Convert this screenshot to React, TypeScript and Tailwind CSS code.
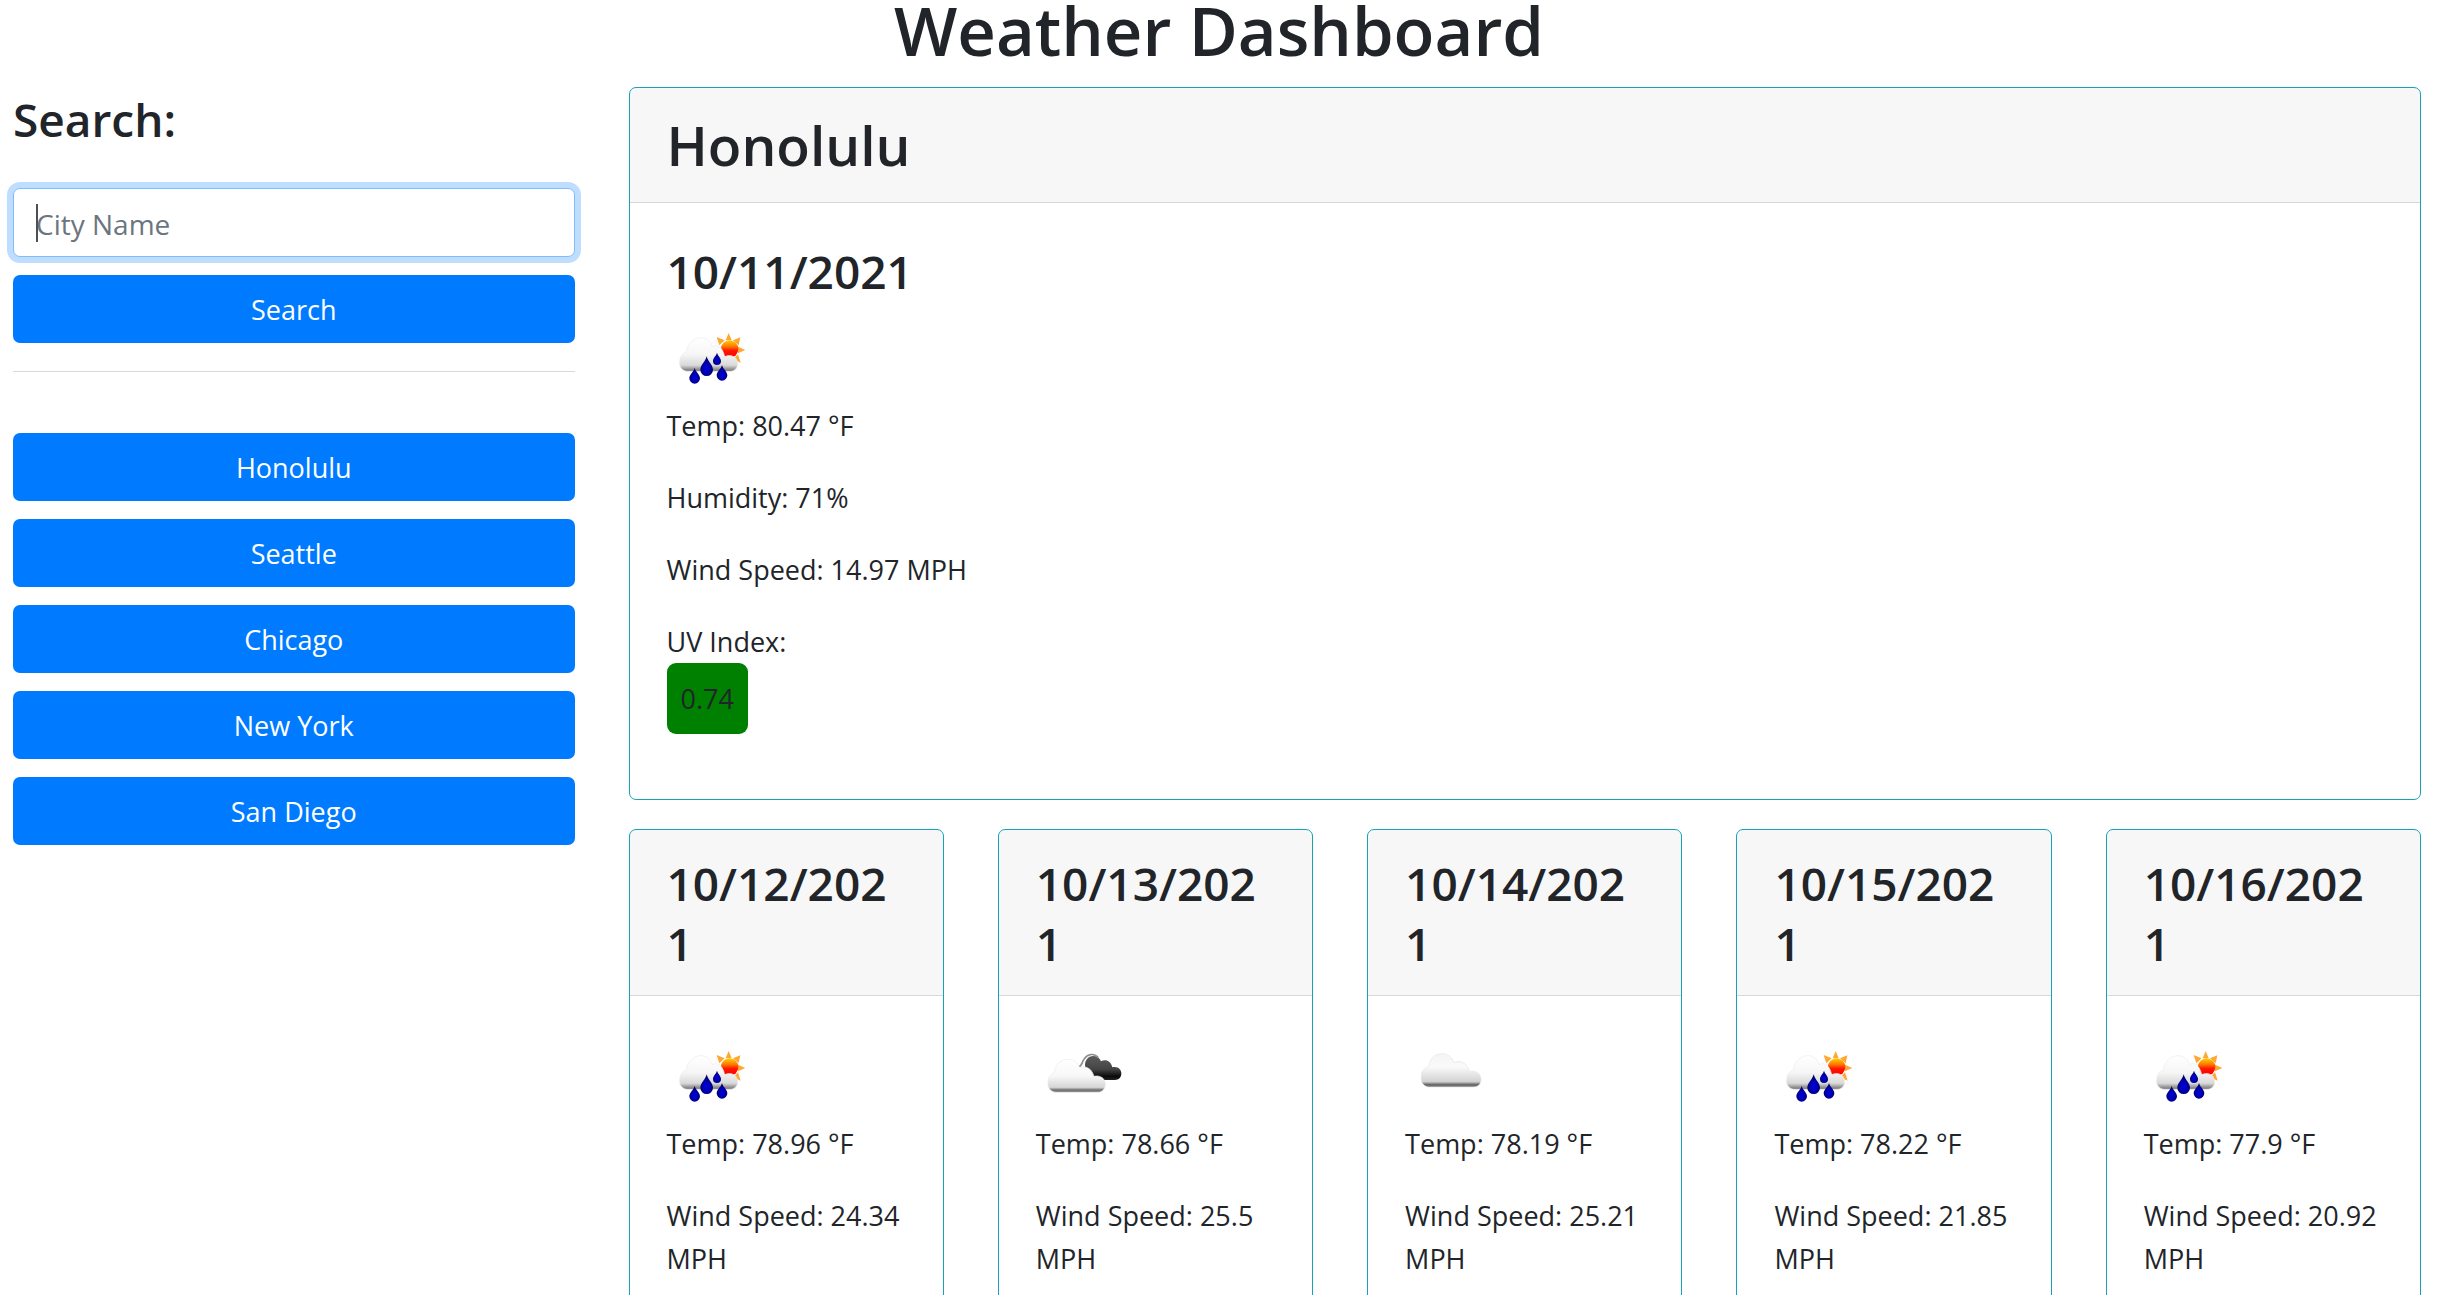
import { useId } from "react";

type IconName = "rain" | "broken" | "cloud";

const cities = ["Honolulu", "Seattle", "Chicago", "New York", "San Diego"];

const forecast: { date: string; icon: IconName; temp: string; wind: string }[] = [
  { date: "10/12/2021", icon: "rain", temp: "78.96", wind: "24.34" },
  { date: "10/13/2021", icon: "broken", temp: "78.66", wind: "25.5" },
  { date: "10/14/2021", icon: "cloud", temp: "78.19", wind: "25.21" },
  { date: "10/15/2021", icon: "rain", temp: "78.22", wind: "21.85" },
  { date: "10/16/2021", icon: "rain", temp: "77.9", wind: "20.92" },
];

function RainIcon() {
  const id = useId();
  return (
    <svg viewBox="48 9 270 270" className="block size-[90px]" role="img" aria-label="Rain">
      <defs>
        <linearGradient id={`${id}c`} x1="0" y1="0" x2="0" y2="1">
          <stop offset="0" stopColor="#ffffff" />
          <stop offset="0.5" stopColor="#f6f6f6" />
          <stop offset="0.82" stopColor="#d9d9d9" />
          <stop offset="0.95" stopColor="#8a8a8a" />
          <stop offset="1" stopColor="#777777" />
        </linearGradient>
        <linearGradient id={`${id}s`} x1="0" y1="0" x2="0" y2="1">
          <stop offset="0.05" stopColor="#ffc400" />
          <stop offset="0.35" stopColor="#ff7a00" />
          <stop offset="0.6" stopColor="#ff1400" />
          <stop offset="1" stopColor="#ff0000" />
        </linearGradient>
        <radialGradient id={`${id}d`} cx="0.5" cy="0.62" r="0.55">
          <stop offset="0" stopColor="#0000e0" />
          <stop offset="0.5" stopColor="#0000b4" />
          <stop offset="1" stopColor="#000050" />
        </radialGradient>
      </defs>
      <path
        fill="#ffa733"
        d="M233 66 L242 88 L224 88Z M268 79 L263 103 L246 88Z M283 117 L261 127 L261 107Z M269 155 L247 145 L261 130Z M197 78 L221 88 L205 103Z"
      />
      <circle cx="236" cy="114" r="26" fill={`url(#${id}s)`} />
      <path
        fill={`url(#${id}c)`}
        stroke="#ececec"
        strokeWidth="2"
        d="M108 181 C92 179 84 166 86 152 C86 138 94 128 106 122 C110 95 130 80 150 80 C168 80 180 92 184 107 C198 98 215 108 221 137 C242 127 260 140 260 158 C260 172 250 181 236 181Z"
      />
      <g fill={`url(#${id}d)`}>
        <path d="M198 125 C201 136 210 140 210 150 A12 12 0 0 1 186 150 C186 140 195 136 198 125Z" />
        <path d="M167 136 C171 153 186 162 186 176 A19 19 0 0 1 148 176 C148 162 163 153 167 136Z" />
        <path d="M131 170 C134 184 147 190 147 202 A16 16 0 0 1 115 202 C115 190 128 184 131 170Z" />
        <path d="M213 162 C216 175 229 181 229 193 A16 16 0 0 1 197 193 C197 181 210 175 213 162Z" />
      </g>
    </svg>
  );
}

function BrokenCloudsIcon() {
  const id = useId();
  return (
    <svg viewBox="45 6 270 270" className="block size-[90px]" role="img" aria-label="Broken clouds">
      <defs>
        <linearGradient id={`${id}c`} x1="0" y1="0" x2="0" y2="1">
          <stop offset="0" stopColor="#ffffff" />
          <stop offset="0.5" stopColor="#f8f8f8" />
          <stop offset="0.85" stopColor="#d6d6d6" />
          <stop offset="0.93" stopColor="#6e6e6e" />
          <stop offset="1" stopColor="#8c8c8c" />
        </linearGradient>
        <linearGradient id={`${id}b`} x1="0" y1="0" x2="0" y2="1">
          <stop offset="0" stopColor="#5c5c5c" />
          <stop offset="0.55" stopColor="#444444" />
          <stop offset="0.85" stopColor="#0a0a0a" />
          <stop offset="1" stopColor="#222222" />
        </linearGradient>
      </defs>
      <path
        fill={`url(#${id}b)`}
        d="M192 106 C192 90 202 78 216 78 C228 78 236 84 240 94 C254 86 270 94 274 112 C290 108 301 118 301 130 C301 143 293 150 282 150 L200 150Z"
      />
      <path fill="none" stroke="#8e8e8e" strokeWidth="5" d="M173 110 C184 108 182 96 190 86 C200 72 220 68 232 83" />
      <path
        fill={`url(#${id}c)`}
        stroke="#ebebeb"
        strokeWidth="2"
        d="M104 187 C88 185 79 172 81 158 C80 142 90 131 101 126 C104 100 120 88 142 88 C160 88 172 98 176 114 C192 106 212 114 219 139 C238 134 253 146 253 162 C253 177 244 187 230 187Z"
      />
    </svg>
  );
}

function CloudIcon() {
  const id = useId();
  return (
    <svg viewBox="44 6 270 270" className="block size-[90px]" role="img" aria-label="Clouds">
      <defs>
        <linearGradient id={`${id}c`} x1="0" y1="0" x2="0" y2="1">
          <stop offset="0" stopColor="#f4f4f4" />
          <stop offset="0.4" stopColor="#fafafa" />
          <stop offset="0.84" stopColor="#d2d2d2" />
          <stop offset="0.93" stopColor="#666666" />
          <stop offset="1" stopColor="#808080" />
        </linearGradient>
      </defs>
      <path
        fill={`url(#${id}c)`}
        stroke="#e4e4e4"
        strokeWidth="2"
        d="M114 171 C99 169 91 156 93 142 C91 125 103 114 116 109 C119 84 135 71 154 71 C172 71 186 82 191 98 C206 90 228 94 238 125 C256 119 272 131 272 148 C272 162 264 171 250 171Z"
      />
    </svg>
  );
}

const icons = { rain: RainIcon, broken: BrokenCloudsIcon, cloud: CloudIcon };

const blueButton =
  "block h-[68px] w-full cursor-pointer rounded-[7px] bg-[#007bff] text-center leading-[43px] text-white";
const card = "overflow-hidden rounded-[7px] border border-[#17a2b8] bg-white";
const cardHeader = "border-b border-black/[.125] bg-black/[.03] px-[37px]";

export default function App() {
  const today: IconName = "rain";
  const TodayIcon = icons[today];
  return (
    <div className='min-h-screen bg-white font-["Open_Sans","Noto_Sans",sans-serif] text-[27px] leading-[43px] text-[#212529]'>
      <h1 className="mb-[27px] text-center text-[67px] leading-[60px] font-semibold">Weather Dashboard</h1>
      <div className="flex items-start">
        <aside className="w-1/4 shrink-0 pr-[35px] pl-[13px]">
          <form onSubmit={(e) => e.preventDefault()}>
            <h3 className="text-[46px] leading-[64px] font-semibold">
              <label htmlFor="city">Search:</label>
            </h3>
            <div className="relative mt-[37px] mb-[18px]">
              <input
                id="city"
                type="text"
                placeholder="City Name"
                className="block h-[69px] w-full rounded-[7px] border border-[#80bdff] bg-white px-[22px] pt-0.5 text-[28px] caret-transparent ring-[6px] ring-[#007bff]/25 outline-none placeholder:text-[#6c757d]"
              />
              <span className="absolute top-4 left-[23px] h-[38px] w-0.5 bg-[#495057]" />
            </div>
            <button type="submit" className={blueButton}>
              Search
            </button>
          </form>
          <hr className="mt-7 mb-[61px] border-t border-black/15" />
          <div className="flex flex-col gap-[18px]">
            {cities.map((c) => (
              <button key={c} type="button" className={blueButton}>
                {c}
              </button>
            ))}
          </div>
        </aside>
        <main className="min-w-0 flex-1 pr-[17px] pl-[19px]">
          <section className={card}>
            <div className={`${cardHeader} py-6`}>
              <h2 className="text-[55px] leading-[66px] font-semibold">Honolulu</h2>
            </div>
            <div className="px-[37px] pt-[38px] pb-[65px]">
              <h3 className="mb-[13px] text-[46px] leading-[60px] font-semibold">10/11/2021</h3>
              <TodayIcon />
              <p className="mb-[29px]">Temp: 80.47 °F</p>
              <p className="mb-[29px]">Humidity: 71%</p>
              <p className="mb-[29px]">Wind Speed: 14.97 MPH</p>
              <p>UV Index:</p>
              <p className="w-fit rounded-[9px] bg-[#008000] p-[14px]">0.74</p>
            </div>
          </section>
          <div className="mt-[29px] grid grid-cols-5 gap-[54px]">
            {forecast.map((f) => {
              const Icon = icons[f.icon];
              return (
                <section key={f.date} className={card}>
                  <div className={`${cardHeader} pt-[23px] pb-[22px]`}>
                    <h3 className="text-[46px] leading-[60px] font-semibold break-all">{f.date}</h3>
                  </div>
                  <div className="px-[37px] py-9">
                    <Icon />
                    <p className="mb-[29px]">Temp: {f.temp} °F</p>
                    <p className="mb-[29px]">Wind Speed: {f.wind} MPH</p>
                  </div>
                </section>
              );
            })}
          </div>
        </main>
      </div>
    </div>
  );
}
